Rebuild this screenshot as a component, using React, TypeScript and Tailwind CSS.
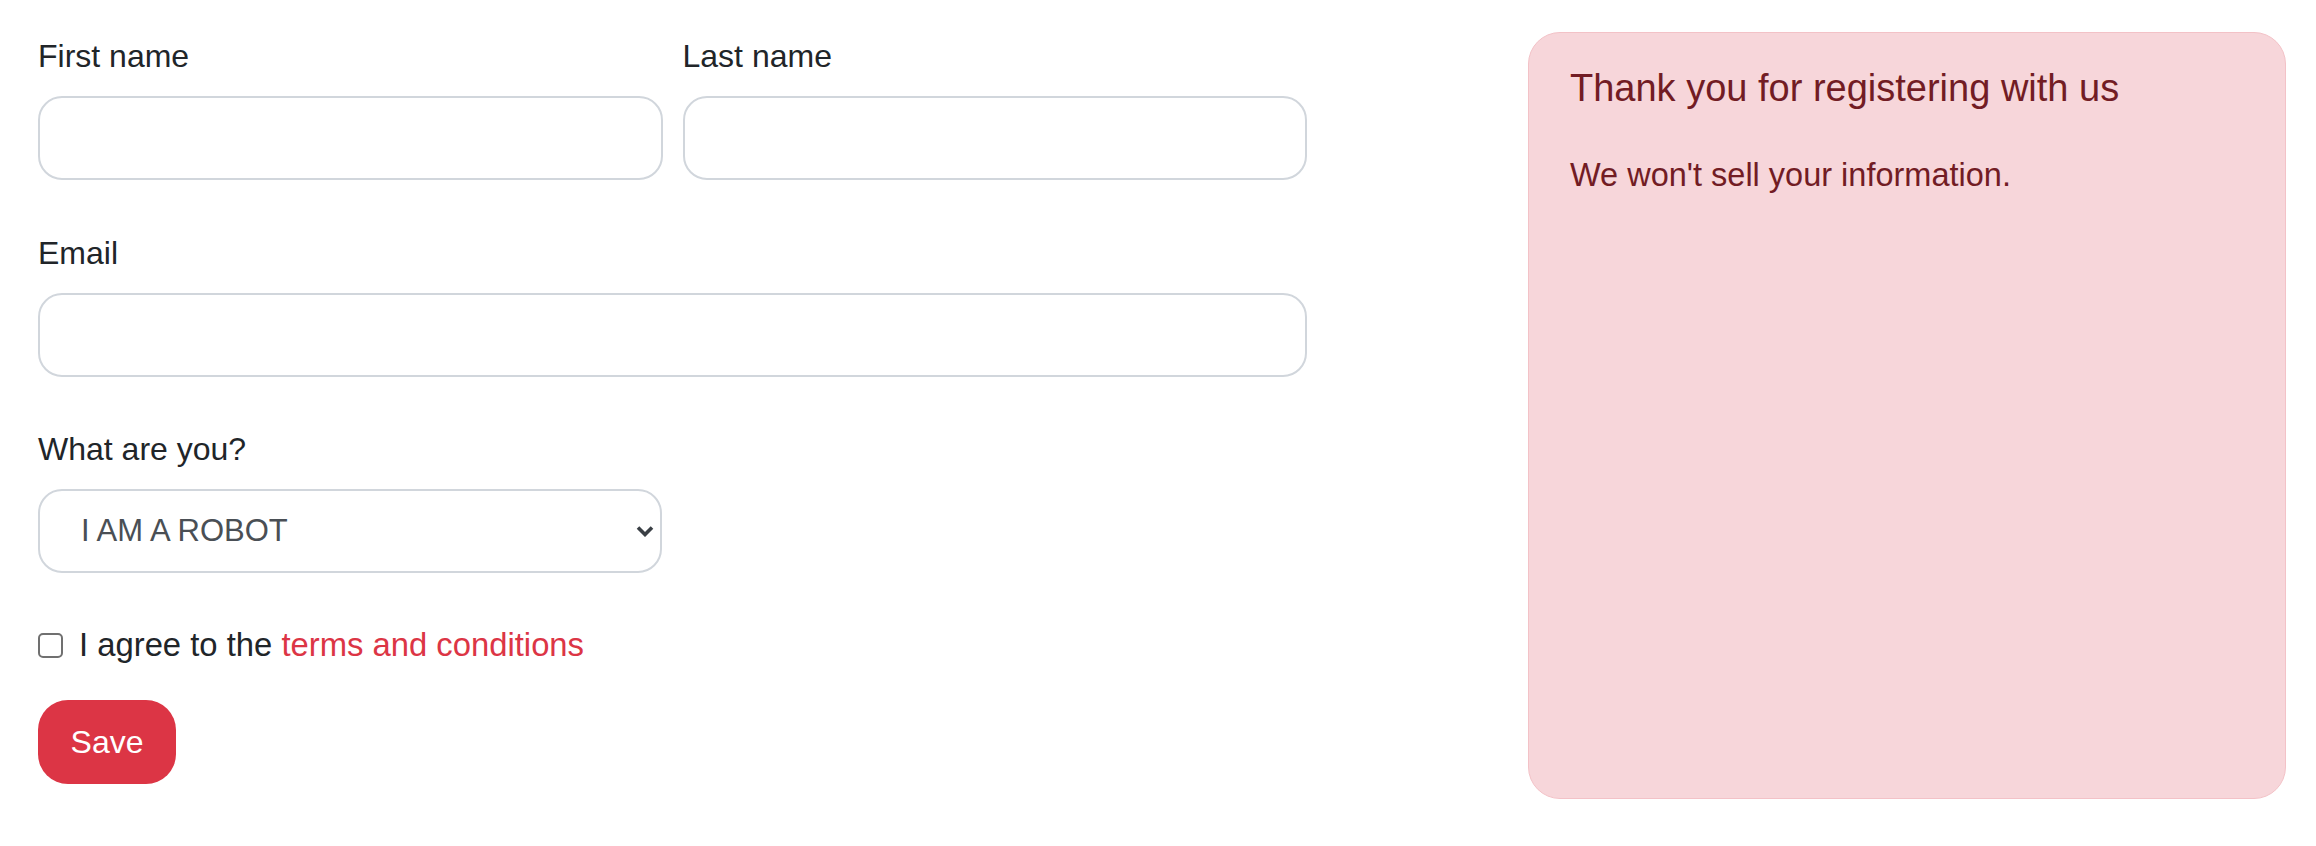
import { useState } from 'react';

const inputClass =
  'block w-full h-[84px] rounded-[24px] border-2 border-[#d1d6dc] bg-white px-[24px] text-[32px] text-[#212529] outline-none';

export default function App() {
  const [agreed, setAgreed] = useState(false);
  const [kind, setKind] = useState('robot');

  return (
    <div className="flex justify-between bg-white pl-[38px] pr-[30px] pt-[32px] font-['Liberation_Sans',Arial,sans-serif] text-[#212529]">
      {/* Registration form */}
      <form className="w-[1269px]" onSubmit={(e) => e.preventDefault()}>
        <div className="grid grid-cols-2 gap-x-[20px]">
          <div>
            <label className="mb-[16px] block text-[32px] leading-[48px]">First name</label>
            <input type="text" className={inputClass} />
          </div>
          <div>
            <label className="mb-[16px] block text-[32px] leading-[48px]">Last name</label>
            <input type="text" className={inputClass} />
          </div>
        </div>

        <div className="mt-[49px]">
          <label className="mb-[16px] block text-[32px] leading-[48px]">Email</label>
          <input type="email" className={inputClass} />
        </div>

        <div className="mt-[48px] w-[624px]">
          <label className="mb-[16px] block text-[32px] leading-[48px]">What are you?</label>
          <div className="relative">
            <select
              value={kind}
              onChange={(e) => setKind(e.target.value)}
              className="block h-[84px] w-full appearance-none rounded-[24px] border-2 border-[#d1d6dc] bg-white pl-[41px] text-[31px] text-[#4a4f55] outline-none"
            >
              <option value="robot">I AM A ROBOT</option>
              <option value="human">I AM A HUMAN</option>
            </select>
            <svg
              width="18"
              height="12"
              viewBox="0 0 18 12"
              className="pointer-events-none absolute right-[8px] top-1/2 -translate-y-1/2"
            >
              <path d="M2 2.5 L9 9.5 L16 2.5" fill="none" stroke="#3a3f45" strokeWidth="3.6" />
            </svg>
          </div>
        </div>

        <div className="mt-[48px] flex h-[48px] items-center gap-[16px] text-[32.8px]">
          <input
            type="checkbox"
            checked={agreed}
            onChange={(e) => setAgreed(e.target.checked)}
            className="h-[25px] w-[25px] appearance-none rounded-[5px] border-2 border-[#707070] bg-white checked:bg-[#dc3545]"
          />
          <span>
            I agree to the <a href="#" className="text-[#dc3545]">terms and conditions</a>
          </span>
        </div>

        <button
          type="submit"
          className="mt-[31px] h-[84px] w-[138px] rounded-[30px] bg-[#dc3545] text-[32px] text-white"
        >
          Save
        </button>
      </form>

      {/* Info panel */}
      <div className="h-[767px] w-[758px] rounded-[32px] border border-[#f3c2c7] bg-[#f7d6da] pl-[41px] pr-[32px] pt-[33px] text-[#721c24]">
        <h4 className="text-[38px] font-normal leading-[1.2]">Thank you for registering with us</h4>
        <p className="mt-[39px] text-[32.5px] leading-[48px]">We won't sell your information.</p>
      </div>
    </div>
  );
}
